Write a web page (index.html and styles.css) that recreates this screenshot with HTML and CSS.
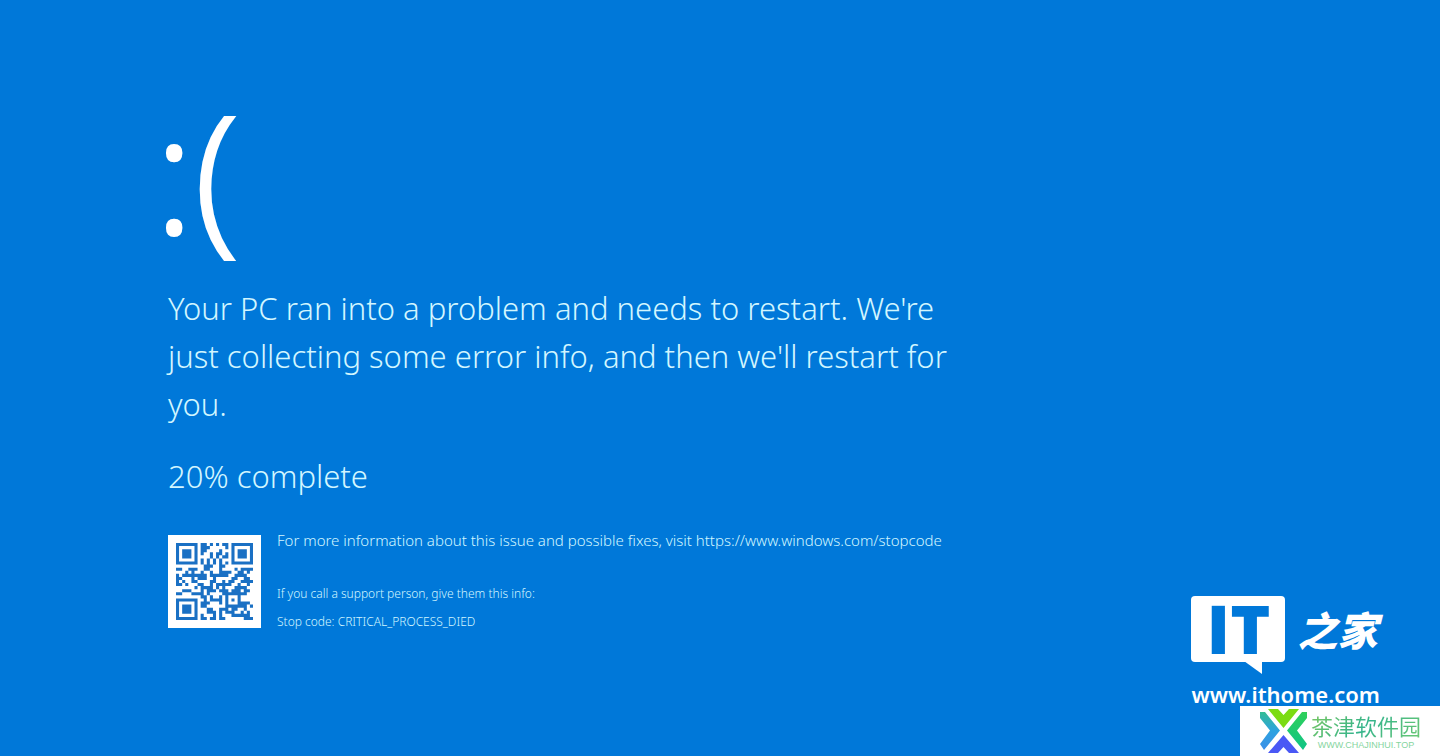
FILE: index.html
```html
<!DOCTYPE html>
<html lang="en">
<head>
<meta charset="utf-8">
<title>Stop code</title>
<link rel="stylesheet" href="styles.css">
</head>
<body>
<main class="screen">
  <h1 class="face">:(</h1>
  <p class="message">Your PC ran into a problem and needs to restart. We're just collecting some error info, and then we'll restart for you.</p>
  <p class="message progress">20% complete</p>
  <section class="details">
    <svg class="qr" viewBox="0 0 93 93" role="img" aria-label="QR code"><g transform="translate(8 8) scale(3.08)"><path id="qr-modules" fill="#1a70c4"/></g></svg>
    <div class="info">
      <p class="more">For more information about this issue and possible fixes, visit https://www.windows.com/stopcode</p>
      <p class="support">If you call a support person, give them this info:</p>
      <p class="support">Stop code: CRITICAL_PROCESS_DIED</p>
    </div>
  </section>
</main>
<aside class="brand">
  <div class="brand-row">
    <div class="bubble">IT<svg class="tail" viewBox="0 0 18 13" aria-hidden="true"><path d="M0 0H18V13Z" fill="#fff"/></svg></div>
    <span class="brand-cn" lang="zh">之家</span>
  </div>
  <span class="brand-url">www.ithome.com</span>
</aside>
<aside class="mark">
  <svg class="mark-logo" viewBox="0 0 48 46" aria-hidden="true">
    <defs>
      <linearGradient id="left" x1="0" y1="0" x2="0" y2="1"><stop offset="0" stop-color="#35bd94"/><stop offset=".5" stop-color="#2da2e0"/><stop offset="1" stop-color="#3b8fe8"/></linearGradient>
      <linearGradient id="right" x1="0" y1="0" x2="0" y2="1"><stop offset="0" stop-color="#2fd05a"/><stop offset="1" stop-color="#0fc487"/></linearGradient>
    </defs>
    <path d="M8 1H18L23.500 7L29 1H39L23.500 20Z" fill="#7bdc12"/>
    <path d="M5 4L20 22.500L4 42L0 36L10 22.500L0 10V4Z" fill="url(#left)"/>
    <path d="M42 4L27 22.500L43 42L47 36L37 22.500L47 10V4Z" fill="url(#right)"/>
    <path d="M23.500 27L39 45H29L23.500 39L18 45H8Z" fill="#4a58f5"/>
  </svg>
  <div class="mark-text">
    <span class="mark-name" lang="zh">茶津软件园</span>
    <span class="mark-url">WWW.CHAJINHUI.TOP</span>
  </div>
</aside>
<script src="qr.js"></script>
</body>
</html>
```
FILE: styles.css
```css
body {
  margin: 0;
  min-height: 100vh;
  background: #0078d9;
  color: #d2f6ff;
  font-family: "Noto Sans", "Open Sans", sans-serif;
  font-weight: 300;
  position: relative;
  overflow: hidden;
}
p, h1 { margin: 0; }
.screen { padding: 80px 168px 0; }
.face {
  margin-left: -14px;
  padding-bottom: 22px;
  font-size: 164px;
  line-height: 182px;
  font-weight: 300;
  color: #fff;
  -webkit-text-stroke: 2px #fff;
}
.message {
  max-width: 800px;
  font-size: 31px;
  line-height: 48px;
}
.progress { margin-top: 24px; }
.details {
  display: flex;
  gap: 16px;
  margin-top: 35px;
}
.qr {
  width: 93px;
  height: 93px;
  background: #fff;
  flex: none;
}
.info { white-space: nowrap; }
.more {
  font-size: 15px;
  line-height: 10px;
  margin-bottom: 35px;
}
.support {
  font-size: 12px;
  line-height: 28px;
}
.brand {
  position: absolute;
  right: 60px;
  bottom: 48px;
  color: #fff;
  font-weight: 700;
}
.brand-row {
  display: flex;
  gap: 12px;
}
.bubble {
  position: relative;
  width: 94px;
  height: 66px;
  border-radius: 4px;
  background: #fff;
  color: #0078d9;
  font-family: "Open Sans", sans-serif;
  font-size: 68px;
  line-height: 64px;
  font-weight: 800;
  text-align: center;
}
.tail {
  position: absolute;
  left: 53px;
  top: 65px;
  width: 18px;
  height: 13px;
}
.brand-cn {
  font-family: "Noto Sans CJK SC", sans-serif;
  font-size: 40px;
  line-height: 66px;
  font-weight: 900;
  font-style: italic;
}
.brand-url {
  display: block;
  margin-top: 18px;
  font-size: 22px;
  line-height: 28px;
  font-weight: 600;
}
.mark {
  position: absolute;
  right: 0;
  bottom: 0;
  width: 180px;
  height: 50px;
  padding-left: 20px;
  display: flex;
  align-items: center;
  gap: 3px;
  background: #fff;
}
.mark-logo { width: 48px; height: 46px; }
.mark-text {
  display: flex;
  flex-direction: column;
  align-items: center;
}
.mark-name {
  font-family: "Noto Sans CJK SC", sans-serif;
  font-size: 22px;
  line-height: 28px;
  font-weight: 400;
  color: transparent;
  background: linear-gradient(135deg, #7cc860, #35b48c 50%, #6cc873);
  background-clip: text;
  -webkit-background-clip: text;
}
.mark-url {
  font-family: "Liberation Sans", sans-serif;
  font-size: 9px;
  line-height: 12px;
  font-weight: 400;
  color: #86d5a0;
}
```
FILE: qr.js
```js
// Version 2-L QR code (25x25 modules), byte mode, mask 4.
const text = "https://www.windows.com/stopcode";
const N = 25;
const bits = [];
const push = (v, n) => { for (let i = n - 1; i >= 0; i--) bits.push((v >> i) & 1); };
push(4, 4);
push(text.length, 8);
for (const ch of text) push(ch.charCodeAt(0), 8);
push(0, Math.min(4, 272 - bits.length));
while (bits.length % 8) bits.push(0);
const data = [];
for (let i = 0; i < bits.length; i += 8) data.push(parseInt(bits.slice(i, i + 8).join(""), 2));
for (let pad = 0xec; data.length < 34; pad ^= 0xfd) data.push(pad);

// Reed-Solomon remainder over GF(256), 10 error correction bytes.
const mul = (a, b) => {
  let r = 0;
  for (let i = 7; i >= 0; i--) r = (r << 1) ^ ((r >> 7) * 0x11d) ^ (((b >> i) & 1) * a);
  return r;
};
const gen = Array(10).fill(0);
gen[9] = 1;
let root = 1;
for (let i = 0; i < 10; i++) {
  for (let j = 0; j < 10; j++) gen[j] = mul(gen[j], root) ^ (j < 9 ? gen[j + 1] : 0);
  root = mul(root, 2);
}
const ecc = Array(10).fill(0);
for (const b of data) {
  const f = b ^ ecc.shift();
  ecc.push(0);
  gen.forEach((g, i) => { ecc[i] ^= mul(g, f); });
}

// Timing, finder and alignment patterns.
const grid = Array.from({ length: N }, () => Array(N).fill(null));
const set = (r, c, v) => { if (r >= 0 && c >= 0 && r < N && c < N) grid[r][c] = v ? 1 : 0; };
for (let i = 0; i < N; i++) { set(6, i, i % 2 === 0); set(i, 6, i % 2 === 0); }
for (const [r, c] of [[3, 3], [3, 21], [21, 3]])
  for (let y = -4; y <= 4; y++)
    for (let x = -4; x <= 4; x++) {
      const d = Math.max(Math.abs(x), Math.abs(y));
      set(r + y, c + x, d !== 2 && d !== 4);
    }
for (let y = -2; y <= 2; y++)
  for (let x = -2; x <= 2; x++) set(18 + y, 18 + x, Math.max(Math.abs(x), Math.abs(y)) !== 1);

// Format bits.
const format = 0b110011000101111;
const bit = i => (format >> i) & 1;
for (let i = 0; i < 6; i++) set(i, 8, bit(i));
set(7, 8, bit(6));
set(8, 8, bit(7));
set(8, 7, bit(8));
for (let i = 9; i < 15; i++) set(8, 14 - i, bit(i));
for (let i = 0; i < 8; i++) set(8, N - 1 - i, bit(i));
for (let i = 8; i < 15; i++) set(N - 15 + i, 8, bit(i));
set(N - 8, 8, 1);

// Data in the zigzag order, masked.
const stream = data.concat(ecc);
let k = 0;
for (let right = N - 1; right >= 1; right -= 2) {
  if (right === 6) right = 5;
  for (let v = 0; v < N; v++)
    for (let j = 0; j < 2; j++) {
      const c = right - j;
      const r = ((right + 1) & 2) === 0 ? N - 1 - v : v;
      if (grid[r][c] !== null) continue;
      const b = k < stream.length * 8 ? (stream[k >> 3] >> (7 - (k & 7))) & 1 : 0;
      k++;
      grid[r][c] = b ^ (((r >> 1) + Math.floor(c / 3)) % 2 === 0 ? 1 : 0);
    }
}
let d = "";
grid.forEach((row, r) => row.forEach((v, c) => { if (v) d += `M${c} ${r}h1v1h-1z`; }));
document.getElementById("qr-modules").setAttribute("d", d);
```
